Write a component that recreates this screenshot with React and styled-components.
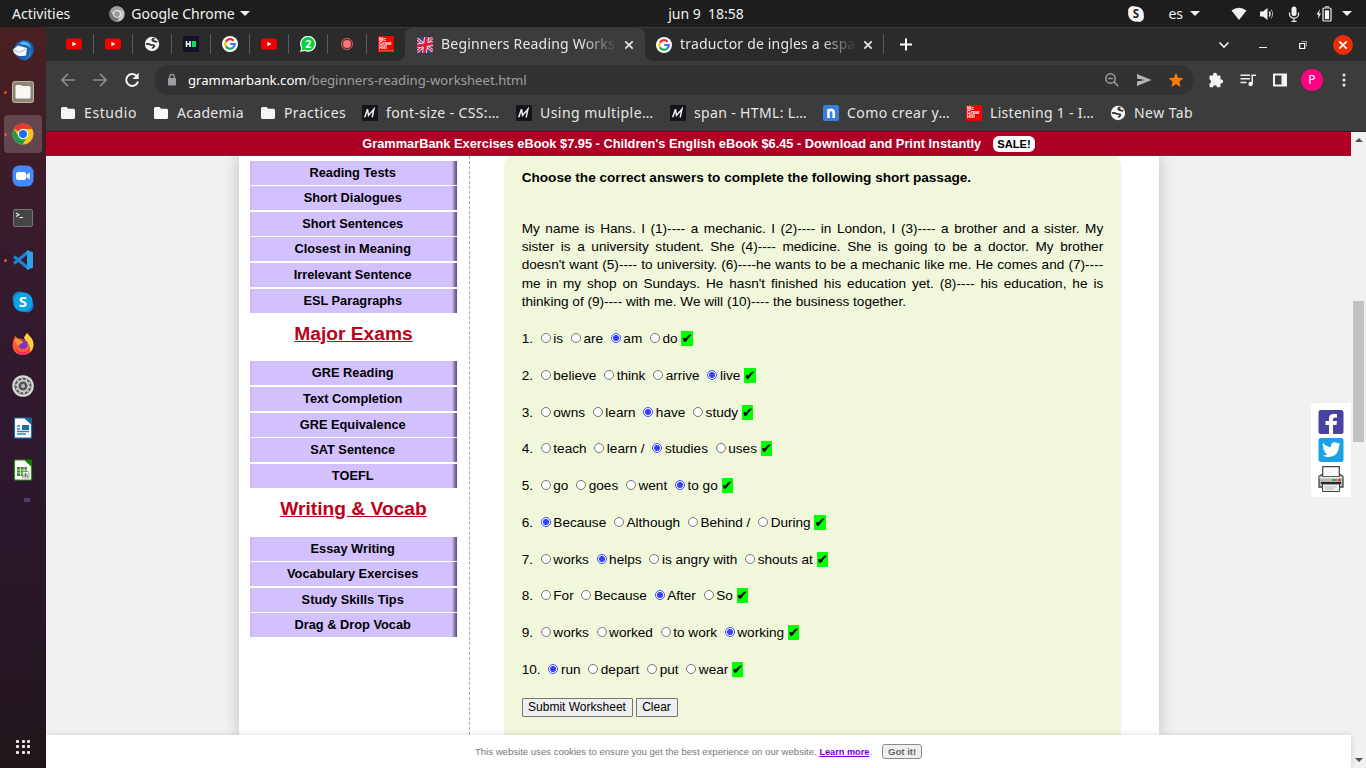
import React from "react";
import styled, { createGlobalStyle, css } from "styled-components";

const UI = `"Noto Sans", "Open Sans", sans-serif`;
const ARIAL = `"Liberation Sans", "DejaVu Sans", sans-serif`;

const GlobalStyle = createGlobalStyle`
  * { box-sizing: border-box; }
  body { margin: 0; overflow: hidden; background: #f1f1f1; }
  svg { display: block; flex: none; }
`;

/* ---------- desktop shell ---------- */
const Desktop = styled.div`
  width: 1366px;
  height: 768px;
  display: flex;
  flex-direction: column;
  overflow: hidden;
  font-family: ${UI};
`;
const TopBar = styled.header`
  height: 27px;
  flex: none;
  display: grid;
  grid-template-columns: 1fr auto 1fr;
  align-items: center;
  background: #1d1d1d;
  color: #f2f2f2;
  font-size: 14px;
  line-height: 27px;
  padding: 0 14px 0 12px;
`;
const Clock = styled.time`
  margin-left: 48px;
  white-space: pre;
  margin-top: -1px;
`;
const TopGroup = styled.div`
  display: flex;
  align-items: center;
  justify-content: ${(p) => (p.$end ? "flex-end" : "flex-start")};
`;
const Label = styled.span`
  white-space: pre;
  letter-spacing: ${(p) => p.$track || 0}px;
  margin-left: ${(p) => p.$ml || 0}px;
`;
const Gap = styled.span`
  flex: none;
  width: ${(p) => p.$w}px;
`;
const Caret = styled.i`
  border: 5px solid transparent;
  border-top-color: #f2f2f2;
  border-bottom: 0;
`;
const Workspace = styled.div`
  flex: 1;
  display: flex;
  min-height: 0;
`;

/* ---------- dock ---------- */
const Dock = styled.nav`
  width: 46px;
  flex: none;
  display: flex;
  flex-direction: column;
  padding: 2px 4px 10px;
  background: linear-gradient(#4a2022 0, #3d1c28 18%, #331a2e 38%, #2d182d 60%, #271726 82%, #20161a 100%);
`;
const DockSlot = styled.div`
  position: relative;
  height: 42px;
  flex: none;
  display: flex;
  align-items: center;
  justify-content: center;
  ${(p) =>
    p.$active &&
    css`
      &::before {
        content: "";
        position: absolute;
        inset: 2px 0;
        border-radius: 4px;
        background: rgba(255, 255, 255, 0.19);
      }
    `}
  ${(p) =>
    p.$running &&
    css`
      &::after {
        content: "";
        position: absolute;
        left: 0;
        top: 20px;
        width: 3px;
        height: 3px;
        border-radius: 50%;
        background: #e95420;
      }
    `}
  svg { position: relative; }
`;
const DockStub = styled.div`
  width: 6px;
  height: 4px;
  margin: 7px 0 0 20px;
  background: #47406a;
`;
const AppsGrid = styled.div`
  margin: auto auto 4px;
  display: grid;
  grid-template-columns: repeat(3, 3px);
  grid-auto-rows: 3px;
  gap: 2.6px;
  i { background: #eee; border-radius: 1px; }
`;

/* ---------- browser chrome ---------- */
const Browser = styled.main`
  flex: 1;
  min-width: 0;
  display: flex;
  flex-direction: column;
  background: #3c3c3c;
`;
const TabStrip = styled.div`
  height: 34px;
  flex: none;
  display: flex;
  background: #2b2b2b;
  border-top: 1px solid #3b3b3b;
  padding-left: 9px;
`;
const PinnedTab = styled.div`
  width: 39px;
  flex: none;
  display: flex;
  align-items: center;
  justify-content: center;
  border-right: 1px solid ${(p) => (p.$last ? "transparent" : "#5d5d5d")};
  height: 20px;
  margin: 6px 0;
`;
const Tab = styled.div`
  position: relative;
  width: ${(p) => p.$w}px;
  flex: none;
  display: flex;
  align-items: center;
  padding-left: ${(p) => (p.$active ? 12 : 11)}px;
  color: #e6e6e6;
  font-size: 14px;
  margin-left: ${(p) => (p.$active ? -1 : 0)}px;
  ${(p) =>
    p.$active &&
    css`
      background: #3c3c3c;
      border-radius: 8px 8px 0 0;
      &::before, &::after {
        content: "";
        position: absolute;
        bottom: 0;
        width: 8px;
        height: 8px;
      }
      &::before { right: 100%; background: radial-gradient(circle at 0 0, transparent 7.5px, #3c3c3c 8px); }
      &::after { left: 100%; background: radial-gradient(circle at 100% 0, transparent 7.5px, #3c3c3c 8px); }
    `}
`;
const TabTitle = styled.span`
  width: 175px;
  margin-left: 8px;
  margin-right: 8px;
  white-space: nowrap;
  letter-spacing: ${(p) => p.$track}px;
  line-height: 22px;
  margin-top: -1px;
  mask-image: linear-gradient(to right, #000 80%, transparent 101%);
`;
const TabDivider = styled.i`
  width: 1px;
  height: 20px;
  margin: 6px 14px 0 0;
  background: #5d5d5d;
`;
const WindowControls = styled.div`
  margin-left: auto;
  display: flex;
  align-items: center;
  padding-right: 13px;
`;
const CloseWindow = styled.div`
  width: 20px;
  height: 20px;
  border-radius: 50%;
  background: #e92f06;
  display: grid;
  place-items: center;
  margin-left: 26px;
`;
const Toolbar = styled.div`
  height: 38px;
  flex: none;
  display: flex;
  align-items: center;
  padding: 0 15px 0 14px;
`;
const Omnibox = styled.div`
  flex: 1;
  height: 30px;
  margin: 0 14px;
  border-radius: 15px;
  background: #323232;
  display: flex;
  align-items: center;
  padding: 0 10px 0 11px;
  font-size: 13.15px;
  color: #9e9e9e;
  b { font-weight: 400; color: #fff; }
`;
const OmniActions = styled.div`
  margin-left: auto;
  display: flex;
  align-items: center;
  gap: 16px;
`;
const Avatar = styled.div`
  flex: none;
  width: 22px;
  height: 22px;
  border-radius: 50%;
  background: #ff0083;
  color: #fff;
  font-size: 12px;
  line-height: 22px;
  text-align: center;
  margin: 0 14px 0 13px;
`;
const Bookmarks = styled.div`
  height: 33px;
  flex: none;
  display: flex;
  align-items: center;
  padding: 0 0 5px 14px;
  border-bottom: 1px solid #262626;
  color: #e6e6e6;
  font-size: 14px;
`;
const Bookmark = styled.div`
  display: flex;
  align-items: center;
  width: ${(p) => p.$w}px;
  flex: none;
`;

/* ---------- web page ---------- */
const Viewport = styled.div`
  flex: 1;
  min-height: 0;
  display: flex;
`;
const Page = styled.div`
  position: relative;
  width: 1305px;
  display: flex;
  flex-direction: column;
  background: #f1f1f1;
  font-family: ${ARIAL};
  color: #000;
`;
const Promo = styled.div`
  position: relative;
  z-index: 1;
  height: 24px;
  flex: none;
  display: flex;
  align-items: center;
  justify-content: center;
  background: #ad0024;
  color: #fff;
  font-weight: 700;
  font-size: 12.8px;
  padding-bottom: 1px;
`;
const Sale = styled.span`
  height: 16px;
  margin-left: 12px;
  padding: 0 4px;
  border-radius: 6px;
  background: #fff;
  color: #000;
  font-size: 11.2px;
  line-height: 16px;
`;
const Scroll = styled.div`
  flex: 1;
  min-height: 0;
  overflow: hidden;
  display: flex;
  justify-content: center;
`;
const Sheet = styled.div`
  width: 920px;
  display: flex;
  background: #fff;
  box-shadow: 0 0 15px rgba(0, 0, 0, 0.22);
`;
const Sidebar = styled.aside`
  width: 231px;
  flex: none;
  padding: 4.6px 12px 0 11px;
  border-right: 1px dashed #aaa;
`;
const NavItem = styled.div`
  height: 24px;
  margin-bottom: 1.6px;
  background: linear-gradient(to right, #c6b6f0, #d3c0ff 3px, #d3c0ff calc(100% - 5px), #9489b4 calc(100% - 3px), #584f70);
  font-weight: 700;
  font-size: 12.8px;
  line-height: 24px;
  text-align: center;
  padding-right: 0.6px;
`;
const NavHeading = styled.h3`
  margin: 0 0 0 1px;
  height: 47.2px;
  padding-top: 9px;
  font-size: 19.2px;
  line-height: 22px;
  text-align: center;
  text-decoration: underline;
  color: #bf0019;
`;
const Worksheet = styled.section`
  width: 617px;
  height: 640px;
  margin: -2px 0 0 34px;
  padding: 14.5px 17.3px 0 18.2px;
  border-radius: 12px 12px 0 0;
  background: #f1f7da;
  font-size: 13.6px;
  line-height: 18.36px;
`;
const Title = styled.p`
  margin: 0 0 32.9px;
  font-weight: 700;
`;
const Passage = styled.p`
  margin: 0 0 18.65px;
  text-align: justify;
`;
const Question = styled.div`
  height: 36.75px;
  white-space: pre;
`;
const Radio = styled.input`
  appearance: none;
  width: 10px;
  height: 10px;
  margin: 0 2.5px 0 4px;
  border: 1px solid #767676;
  border-radius: 50%;
  background: #fff;
  vertical-align: 0;
  &:checked {
    border-color: #3a4dff;
    background: radial-gradient(circle, #3b40ff 2.7px, #fff 3.4px);
  }
`;
const Tick = styled.span`
  background: #0f0;
`;
const Buttons = styled.div`
  display: flex;
  gap: 3px;
  margin: 0.2px 0 0 -0.2px;
`;
const Button = styled.button`
  width: ${(p) => p.$w}px;
  height: 19px;
  padding: 0 0 1px;
  border: 1px solid #767676;
  border-radius: 1px;
  background: #efefef;
  color: #000;
  font: 12px/16px ${ARIAL};
`;
const CookieBar = styled.div`
  position: relative;
  z-index: 1;
  height: 33px;
  flex: none;
  display: flex;
  align-items: center;
  justify-content: center;
  background: #fff;
  box-shadow: 0 0 6px rgba(0, 0, 0, 0.15);
  color: #777;
  font-size: 9.58px;
  a { color: #6a00e8; font-weight: 700; font-size: 9.2px; text-decoration: underline; }
`;
const GotIt = styled.button`
  width: 40px;
  height: 15px;
  margin-left: 10px;
  padding: 0;
  border: 1px solid #8a8a8a;
  border-radius: 3px;
  background: #efefef;
  color: #666;
  font: 700 9.6px/13px ${ARIAL};
`;
const Share = styled.div`
  position: absolute;
  z-index: 2;
  right: 0;
  top: 271px;
  width: 40px;
  height: 94px;
  padding: 7px 7px 0;
  border-radius: 4px 0 0 4px;
  background: #fff;
  display: flex;
  flex-direction: column;
  gap: 4px;
`;
const ScrollBar = styled.div`
  width: 15px;
  display: flex;
  flex-direction: column;
  align-items: center;
  background: #f1f1f1;
`;
const Thumb = styled.div`
  width: 11px;
  height: 141px;
  margin-top: 159px;
  background: #c1c1c1;
`;
const Arrow = styled.i`
  border: 4px solid transparent;
  ${(p) =>
    p.$up
      ? css`border-bottom-color: #505050; border-top: 0; margin-top: 6px;`
      : css`border-top-color: #505050; border-bottom: 0; margin: auto 0 6px;`}
`;

/* ---------- icons ---------- */
const Svg = ({ s = 16, w, h, vb = "0 0 16 16", children, ...rest }) => (
  <svg width={w || s} height={h || s} viewBox={vb} {...rest}>{children}</svg>
);
const YouTube = () => (
  <Svg><rect y="2.500" width="16" height="11" rx="2.600" fill="#f50000" /><path d="M6.400 5.700v4.600L10.400 8z" fill="#fff" /></Svg>
);
const Globe = () => (
  <Svg>
    <circle cx="8" cy="8" r="7.200" fill="#f4f4f4" />
    <path d="M10.600 2.400C8 2.600 7.600 3.800 9 4.800c1.300.9 3 .2 4.200 1.400M1.800 8.200c2-.6 3.400-.4 4.400.4 1.400 1.100 4-.4 4.200 1.200.1 1.400-1.600 1.200-2 2.800" fill="none" stroke="#2b2b2b" strokeWidth="1.700" />
  </Svg>
);
const HD = () => (
  <Svg><rect width="16" height="16" fill="#101424" /><path d="M3.500 5v6M7 5v6M3.500 8H7" stroke="#fff" strokeWidth="1.500" /><path d="M8.800 5h4.200v6H8.800z" fill="#0be060" /></Svg>
);
const Google = () => (
  <Svg>
    <circle cx="8" cy="8" r="8" fill="#fff" />
    <g fill="none" strokeWidth="2.200">
      <path d="M11.600 4.700A4.800 4.800 0 0 0 3.900 5.600" stroke="#ea2a2a" />
      <path d="M3.900 5.600a4.800 4.800 0 0 0 0 4.800" stroke="#fbbc05" />
      <path d="M3.900 10.400a4.800 4.800 0 0 0 7.200 1.200" stroke="#19b34a" />
      <path d="M11.100 11.600A4.800 4.800 0 0 0 12.800 8H8.200" stroke="#4270ff" />
    </g>
  </Svg>
);
const WhatsApp = () => (
  <Svg>
    <path d="M0 16l1.200-4A8 8 0 1 1 4.500 15z" fill="#fff" />
    <path d="M1.600 14.500l.9-3A6.700 6.700 0 1 1 5 13.700z" fill="#00d23e" />
    <text x="8.200" y="12" fontSize="10.500" fontWeight="700" textAnchor="middle" fill="#fff" fontFamily="Noto Sans">2</text>
  </Svg>
);
const Record = () => (
  <Svg><circle cx="8" cy="8" r="5.500" fill="none" stroke="#e86262" strokeWidth="1" /><circle cx="8" cy="8" r="4" fill="#ff7373" /></Svg>
);
const McGraw = ({ foot }) => (
  <Svg>
    <rect width="16" height="16" fill="#f40000" />
    <g fill="#fff" fontFamily="Liberation Sans" fontWeight="700" fontSize="5">
      <text x="1" y="4.800">Mc</text><text x="1" y="9">Graw</text><text x="1" y="13.200">Hill</text>
    </g>
    {foot && <path d="M1 14.800h14" stroke="#ffb0b0" strokeWidth=".8" strokeDasharray="1.500 .6" />}
  </Svg>
);
const UKFlag = () => (
  <Svg>
    <rect width="16" height="16" fill="#35458c" />
    <path d="M0 2l16 12M16 0L0 15" stroke="#f2e6ee" strokeWidth="3" />
    <path d="M0 2l16 12M16 0L0 15" stroke="#d81c3c" strokeWidth="1.300" />
    <path d="M9.500 0L7.500 16M0 9l16-2.500" stroke="#f2e6ee" strokeWidth="4.800" />
    <path d="M9.500 0L7.500 16M0 9l16-2.500" stroke="#d81c3c" strokeWidth="3" />
  </Svg>
);
const Mdn = () => (
  <Svg><rect width="16" height="16" fill="#15141a" /><path d="M2.700 12.300L5.500 4.200L6.500 10.400L11.900 4.200L10.200 12.300" fill="none" stroke="#eee" strokeWidth="1.500" /></Svg>
);
const NIcon = () => (
  <Svg><rect width="16" height="16" rx="1.500" fill="#3b7ddb" /><path d="M5.500 13V4M10.700 13V7.200C10.700 4.400 7.500 4.400 5.500 6" fill="none" stroke="#fff" strokeWidth="2.600" /></Svg>
);
const Folder = () => (
  <Svg><path d="M1 3.500Q1 2 2.500 2h4l1.700 1.800h5.300Q15 3.800 15 5.300v7.200Q15 14 13.500 14h-11Q1 14 1 12.500z" fill="#f8f8f8" /></Svg>
);
const Cross = ({ c = "#e6e6e6", s = 10 }) => (
  <Svg s={s} vb="0 0 10 10"><path d="M1.300 1.300l7.400 7.400M8.700 1.300L1.300 8.700" stroke={c} strokeWidth="1.700" /></Svg>
);
const ChromeLogo = ({ s, gray }) => {
  const [r, y, g, b] = gray ? ["#a0a0a0", "#c4c4c4", "#777", "#999"] : ["#e33b2e", "#fcc31e", "#28994a", "#1a73e8"];
  return (
    <Svg s={s} vb="0 0 24 24">
      <circle cx="12" cy="12" r="11.500" fill={y} />
      <path d="M12 12L2 6.300A11.500 11.500 0 0 1 22 6.500H12z" fill={r} />
      <path d="M2 6.300A11.500 11.500 0 0 0 11.500 23.500L16.700 14.700 12 12 7.200 14.700z" fill={g} />
      <circle cx="12" cy="12" r="5.600" fill="#fff" /><circle cx="12" cy="12" r="4.400" fill={b} />
    </Svg>
  );
};

const Thunderbird = () => (
  <Svg s={22} vb="0 0 22 22">
    <path d="M3 7C7-1 20-1 21.600 9c1 7-4 12-9.600 12.500C5 20 1 14 3 7z" fill="#1c5fb0" />
    <path d="M7 4c6-4 12 0 12 6-2-4-6-4-8-4z" fill="#4fb4f4" />
    <path d="M.8 10.500L6 6.500l9 2.500-1 7.500Q6 18.500 2 14z" fill="#f4f7fb" /><path d="M1.500 10.500l6 3 7-4" fill="none" stroke="#9db4cf" />
    <path d="M11 21q8-3 7-12 3 9-7 12z" fill="#3d8fe2" />
  </Svg>
);
const Files = () => (
  <Svg s={22} vb="0 0 22 22"><rect x=".5" y=".5" width="21" height="21" rx="2" fill="#8d8675" stroke="#bcb5a4" /><path d="M3.500 5.500q0-1.500 1.500-1.500h4l1.500 1H17q1.500 0 1.500 1.500V16q0 1.500-1.500 1.500H5q-1.500 0-1.500-1.500z" fill="#faf8f5" /></Svg>
);
const Zoom = () => (
  <Svg s={22} vb="0 0 22 22"><rect x=".5" y=".5" width="21" height="21" rx="6.500" fill="#4489fb" /><rect x="4" y="7" width="10" height="8" rx="2" fill="#fff" /><path d="M14.500 10l3.200-2.500v7L14.500 12z" fill="#fff" /></Svg>
);
const Terminal = () => (
  <Svg s={22} vb="0 0 22 22"><rect x="1.500" y="2.500" width="19" height="17" rx="1.500" fill="#454545" stroke="#777" /><path d="M4 6l3 1.700L4 9.400M7.500 10.500H11" fill="none" stroke="#eee" strokeWidth="1.100" /></Svg>
);
const VSCode = () => (
  <Svg s={22} vb="0 0 22 22"><path d="M16 3L2 14.500M2 7.500L16 19" stroke="#1d87cf" strokeWidth="3" /><path d="M15 1l6 2.500v15L15 21z" fill="#2ba3ec" /></Svg>
);
const Skype = () => (
  <Svg s={22} vb="0 0 22 22"><circle cx="7" cy="7" r="6.500" fill="#1679c2" /><circle cx="15" cy="15" r="6.500" fill="#1679c2" /><circle cx="11" cy="11" r="9.800" fill="#0aa5e6" /><text x="11" y="16.200" textAnchor="middle" fontFamily="Noto Sans" fontWeight="700" fontSize="15" fill="#fff">S</text></Svg>
);
const Firefox = () => (
  <Svg s={22} vb="0 0 22 22">
    <path d="M1.500 7L3 3l3 2.500h2L13 7l-1-3 3-4 5 6c4 8-1 16-9 16C3 22-1.500 15 1.500 7z" fill="#ff5a36" />
    <path d="M15 0l5 6c2.500 5 1.500 10-1.500 13 0-7-3-10-6.500-14z" fill="#ffd33c" />
    <path d="M3 14q2 5 8 5.500 5-.5 7-5.500 0 6-7 8-7-1-8-8z" fill="#f9285e" />
    <circle cx="11" cy="11.500" r="4.600" fill="#7a35c8" />
    <path d="M3 6q4-1 5 2 4 0 3 2-3 0-3.500 2.500Q3 12 3 6z" fill="#ff9a28" />
  </Svg>
);
const Settings = () => (
  <Svg s={22} vb="0 0 22 22"><circle cx="11" cy="11" r="10.800" fill="#d9d8d4" /><circle cx="11" cy="11" r="8.600" fill="#555" /><circle cx="11" cy="11" r="5.400" fill="none" stroke="#ccc" strokeWidth="1.800" /><circle cx="11" cy="11" r="7" fill="none" stroke="#ccc" strokeWidth="1.700" strokeDasharray="2.200 2.198" /><circle cx="11" cy="11" r="2" fill="#bbb" /></Svg>
);
const Writer = () => (
  <Svg s={22} vb="0 0 22 22"><path d="M2.500 2Q2.500 1 3.500 1H13l6.500 6v13q0 1-1 1h-15q-1 0-1-1z" fill="#fff" stroke="#1c6fa5" strokeWidth="1.200" /><path d="M12 .5h7q1 0 1 1V8z" fill="#16689c" /><path d="M5 9h3M5 12h3M5 14.500h12M5 17h9" stroke="#2d84ba" strokeWidth="1.300" /><rect x="10" y="8" width="7" height="5" fill="#1c6fa5" /></Svg>
);
const Calc = () => (
  <Svg s={22} vb="0 0 22 22"><path d="M2.500 2Q2.500 1 3.500 1H13l6.500 6v13q0 1-1 1h-15q-1 0-1-1z" fill="#fff" stroke="#2c9112" strokeWidth="1.200" /><path d="M12 .5h7q1 0 1 1V8z" fill="#187c0b" /><path d="M5 8h10v9H5z" fill="#38891f" /><path d="M5 11h10M5 14h10M8.500 8v9M12 8v9" stroke="#fff" strokeWidth=".7" /><path d="M10.500 12.500H17V19h-6.500z" fill="#eee" stroke="#777" strokeWidth=".6" /><path d="M12 18v-3" stroke="#d83" /><path d="M13.700 18v-4" stroke="#248" /><path d="M15.400 18v-2.500" stroke="#4a3" /></Svg>
);

const stroke = { fill: "none", stroke: "#eee" };
const SkypeTray = () => (
  <Svg><path d="M5 0A4.800 4.800 0 0 0 .3 6.200 8 8 0 0 0 9.600 15.600 4.800 4.800 0 0 0 15.700 9.600 8 8 0 0 0 6.800.5 4.800 4.800 0 0 0 5 0z" fill="#f4f4f4" /><text x="8" y="12.200" textAnchor="middle" fontFamily="Noto Sans" fontWeight="700" fontSize="11.500" fill="#1d1d1d">S</text></Svg>
);
const Wifi = () => <Svg><path d="M.5 4.500Q8 -1 15.500 4.500L8 14z" fill="#f2f2f2" /></Svg>;
const Volume = () => (
  <Svg><path d="M1 5.500h3L8.500 2v12L4 10.500H1z" fill="#f2f2f2" /><path d="M10.200 5.500q1.800 2.500 0 5" {...stroke} strokeWidth="1.300" /><path d="M12 3.500q3.300 4.500 0 9" {...stroke} stroke="#aaa" strokeWidth="1" /></Svg>
);
const Mic = () => (
  <Svg><rect x="5.500" y=".5" width="5" height="9.500" rx="2.500" fill="#f2f2f2" /><path d="M3.500 6.500v1.700a4.500 4 0 0 0 9 0V6.500M8 12.300V15M5.500 15.300h5" {...stroke} strokeWidth="1.200" /></Svg>
);
const Battery = () => (
  <Svg><path d="M4 3L.5 8.500h2L2 13l3-5.500H3z" fill="#f2f2f2" /><rect x="7" y="2" width="8" height="13" rx="1" {...stroke} strokeWidth="1.200" /><path d="M9 .8h4" stroke="#f2f2f2" /><path d="M8.900 4.300h4.200v8.900H8.900z" fill="#f2f2f2" /></Svg>
);
const ArrowIcon = ({ flip }) => (
  <Svg>
    <path d={flip ? "M1 8h13M8 1.800L14.200 8 8 14.200" : "M15 8H2M8 1.800L1.800 8 8 14.200"} fill="none" stroke="#8b8b8b" strokeWidth="1.700" />
  </Svg>
);
const Reload = () => (
  <Svg><path d="M13 4.300A6 6 0 1 0 14 9.500" fill="none" stroke="#f4f4f4" strokeWidth="2" /><path d="M14.700.8v6.200H8.500z" fill="#f4f4f4" /></Svg>
);
const Lock = () => (
  <Svg s={14} vb="0 0 14 14"><rect x="3" y="5" width="8" height="7.500" rx="1" fill="#9aa0a6" /><path d="M4.800 5V3.500a2.200 2.200 0 0 1 4.400 0V5" fill="none" stroke="#9aa0a6" strokeWidth="1.300" /></Svg>
);
const ZoomOut = () => (
  <Svg><circle cx="6.500" cy="6.500" r="4.700" fill="none" stroke="#a0a0a0" strokeWidth="1.500" /><path d="M4.200 6.500h4.600M10 10l4.300 4.300" stroke="#a0a0a0" strokeWidth="1.500" /></Svg>
);
const Send = () => <Svg><path d="M1 2l14.500 6L1 14V9.400L9 8 1 6.600z" fill="#b4b4b4" /></Svg>;
const Star = () => <Svg><path d="M8 .8l2.100 5 5.300.4-4.100 3.500 1.300 5.200L8 12.100l-4.600 2.800 1.300-5.200L.6 6.200l5.300-.4z" fill="#ff7a0c" /></Svg>;
const Puzzle = () => (
  <Svg><path d="M1.500 4.500q0-1 1-1H5.200a2 2 0 1 1 3.600 0h2.700q1 0 1 1v3a2 2 0 1 1 0 3.800v2.900q0 1-1 1H9a2 2 0 0 0-4 0H2.500q-1 0-1-1V11.400a2 2 0 0 0 0-3.900z" fill="#f4f4f4" /></Svg>
);
const Playlist = () => (
  <Svg><path d="M.5 3.200h9.500M.5 6.800h9.500M.5 10.400h6M12.200 12V3.200H16" fill="none" stroke="#eee" strokeWidth="1.500" /><circle cx="10.600" cy="12" r="2.200" fill="#eee" /></Svg>
);
const SidePanel = () => <Svg><path d="M1 1.500h14v13H1z" fill="#f4f4f4" /><path d="M3 3.500h6.500v9H3z" fill="#3c3c3c" /></Svg>;
const More = () => <Svg s={14} vb="0 0 14 14" fill="#eee"><circle cx="7" cy="2" r="1.500" /><circle cx="7" cy="7" r="1.500" /><circle cx="7" cy="12" r="1.500" /></Svg>;

const Facebook = () => (
  <Svg w={26} h={24} vb="0 0 26 24"><rect x=".5" width="25" height="24" rx="2.500" fill="#4842a0" /><path d="M11 24v-9H7.500v-4H11V8.500Q11 4 15.500 4H19v3.600h-2.200q-1.800 0-1.800 1.800V11h4l-.6 4H15v9z" fill="#fff" /></Svg>
);
const Twitter = () => (
  <Svg w={26} h={24} vb="0 0 26 24"><rect x=".5" width="25" height="24" rx="2.500" fill="#1ba1e2" /><path d="M5 5q3.500 4 8 4.200C12.500 6 14.500 4 17 4.200q1.500.1 2.600 1.200L22 4.500l-1.400 2.200 2-.4L20.800 8.200C21 15 16 19 10.500 19 8 19 6 18.400 4.500 17.500q3 .2 5-1.500Q7 15.700 6 13.300h1.600Q5 12.500 4.800 9.500l1.600.4Q3.800 8 5 5z" fill="#fff" /></Svg>
);
const Printer = () => (
  <Svg w={26} h={28} vb="0 1 26 28">
    <path d="M1 11.500L4 9.500h18l3 2V22H1z" fill="#b8b8b8" stroke="#444" strokeWidth="1.300" />
    <path d="M4.700 1.600h16.600v10H4.700z" fill="#fafafa" stroke="#444" strokeWidth="1.200" /><path d="M1.500 12.600h23" stroke="#eee" strokeWidth="1.500" />
    <path d="M14 14h5v2h-5z" fill="#4c9e66" /><circle cx="21.500" cy="15" r="1.500" fill="#e33" />
    <path d="M3 18h20" stroke="#222" strokeWidth="2" /><path d="M4.500 19h17v7.500h-17z" fill="#eee" stroke="#444" /><path d="M6.500 22h12M6.500 24h9" stroke="#bbb" />
  </Svg>
);

/* ---------- data ---------- */
const pinned = [YouTube, YouTube, Globe, HD, Google, YouTube, WhatsApp, Record, () => <McGraw foot />];
const dock = [
  { Icon: Thunderbird },
  { Icon: Files, running: true },
  { Icon: () => <ChromeLogo s={22} />, running: true, active: true },
  { Icon: Zoom },
  { Icon: Terminal },
  { Icon: VSCode, running: true },
  { Icon: Skype },
  { Icon: Firefox },
  { Icon: Settings },
  { Icon: Writer },
  { Icon: Calc },
];
const bookmarks = [
  [Folder, "Estudio", 93, 0.6],
  [Folder, "Academia", 107, 0.3],
  [Folder, "Practices", 102, 0.4],
  [Mdn, "font-size - CSS:…", 154, 0.37],
  [Mdn, "Using multiple…", 154, 0.46],
  [Mdn, "span - HTML: L…", 153, 0.35],
  [NIcon, "Como crear y…", 143, 0.42],
  [McGraw, "Listening 1 - I…", 144, 0.3],
  [Globe, "New Tab", 100, 0.45],
];
const menu = [
  { items: ["Reading Tests", "Short Dialogues", "Short Sentences", "Closest in Meaning", "Irrelevant Sentence", "ESL Paragraphs"] },
  { title: "Major Exams", items: ["GRE Reading", "Text Completion", "GRE Equivalence", "SAT Sentence", "TOEFL"] },
  { title: "Writing & Vocab", items: ["Essay Writing", "Vocabulary Exercises", "Study Skills Tips", "Drag & Drop Vocab"] },
];
const questions = [
  [["is", "are", "am", "do"], 2],
  [["believe", "think", "arrive", "live"], 3],
  [["owns", "learn", "have", "study"], 2],
  [["teach", "learn /", "studies", "uses"], 2],
  [["go", "goes", "went", "to go"], 3],
  [["Because", "Although", "Behind /", "During"], 0],
  [["works", "helps", "is angry with", "shouts at"], 1],
  [["For", "Because", "After", "So"], 2],
  [["works", "worked", "to work", "working"], 3],
  [["run", "depart", "put", "wear"], 0],
];

export default function App() {
  return (
    <Desktop>
      <GlobalStyle />
      <TopBar>
        <TopGroup>
          <Label>Activities</Label>
          <Gap $w={39} />
          <ChromeLogo s={16} gray />
          <Label $ml={6}>Google Chrome</Label>
          <Gap $w={5} />
          <Caret />
        </TopGroup>
        <Clock>jun 9  18:58</Clock>
        <TopGroup $end>
          <SkypeTray /><Gap $w={24} />
          <Label>es</Label><Gap $w={7} /><Caret /><Gap $w={31} />
          <Wifi /><Gap $w={12} /><Volume /><Gap $w={11} /><Mic /><Gap $w={14} /><Battery /><Gap $w={10} /><Caret />
        </TopGroup>
      </TopBar>

      <Workspace>
        <Dock>
          {dock.map(({ Icon, running, active }, i) => (
            <DockSlot key={i} $running={running} $active={active}><Icon /></DockSlot>
          ))}
          <DockStub />
          <AppsGrid>{Array.from({ length: 9 }, (_, i) => <i key={i} />)}</AppsGrid>
        </Dock>

        <Browser>
          <TabStrip>
            {pinned.map((Icon, i) => (
              <PinnedTab key={i} $last={i === pinned.length - 1}><Icon /></PinnedTab>
            ))}
            <Tab $active $w={240}>
              <UKFlag /><TabTitle $track={0.2}>Beginners Reading Works</TabTitle><Cross />
            </Tab>
            <Tab $w={238}>
              <Google /><TabTitle $track={0.18}>traductor de ingles a espa</TabTitle><Cross />
            </Tab>
            <TabDivider />
            <Svg w={16} h={33} vb="0 0 16 33"><path d="M8 10.500v12M2 16.500h12" stroke="#fff" strokeWidth="2" /></Svg>
            <WindowControls>
              <Svg s={12} vb="0 0 12 12"><path d="M1.500 3.500L6 8l4.500-4.500" fill="none" stroke="#eee" strokeWidth="1.700" /></Svg>
              <Gap $w={29} />
              <Svg w={8} h={12} vb="0 0 8 12"><path d="M0 8.500h8" stroke="#eee" /></Svg>
              <Gap $w={32} />
              <Svg s={8} vb="0 0 8 8"><path d="M.7 2.500h5v5h-5z" fill="none" stroke="#fff" strokeWidth="1.200" /><path d="M2.500.5h5v5" fill="none" stroke="#999" /></Svg>
              <CloseWindow><Cross c="#fff" s={10} /></CloseWindow>
            </WindowControls>
          </TabStrip>

          <Toolbar>
            <ArrowIcon /><Gap $w={16} /><ArrowIcon flip /><Gap $w={16} /><Reload />
            <Omnibox>
              <Lock />
              <Label $ml={9}><b>grammarbank.com</b>/beginners-reading-worksheet.html</Label>
              <OmniActions><ZoomOut /><Send /><Star /></OmniActions>
            </Omnibox>
            <Puzzle /><Gap $w={16} /><Playlist /><Gap $w={16} /><SidePanel />
            <Avatar>P</Avatar>
            <More />
          </Toolbar>

          <Bookmarks>
            {bookmarks.map(([Icon, text, w, track]) => (
              <Bookmark key={text} $w={w}><Icon /><Label $ml={8} $track={track}>{text}</Label></Bookmark>
            ))}
          </Bookmarks>

          <Viewport>
            <Page>
              <Promo>
                GrammarBank Exercises eBook $7.95 - Children's English eBook $6.45 - Download and Print Instantly
                <Sale>SALE!</Sale>
              </Promo>
              <Scroll>
                <Sheet>
                  <Sidebar>
                    {menu.map(({ title, items }, i) => (
                      <React.Fragment key={i}>
                        {title && <NavHeading>{title}</NavHeading>}
                        {items.map((t) => <NavItem key={t}>{t}</NavItem>)}
                      </React.Fragment>
                    ))}
                  </Sidebar>
                  <Worksheet>
                    <Title>Choose the correct answers to complete the following short passage.</Title>
                    <Passage>
                      My name is Hans. I (1)---- a mechanic. I (2)---- in London, I (3)---- a brother and a sister. My
                      sister is a university student. She (4)---- medicine. She is going to be a doctor. My brother
                      doesn't want (5)---- to university. (6)----he wants to be a mechanic like me. He comes and (7)----
                      me in my shop on Sundays. He hasn't finished his education yet. (8)---- his education, he is
                      thinking of (9)---- with me. We will (10)---- the business together.
                    </Passage>
                    {questions.map(([options, picked], q) => (
                      <Question key={q}>
                        {`${q + 1}. `}
                        {options.map((o, i) => (
                          <React.Fragment key={o}>
                            <Radio type="radio" name={`q${q}`} defaultChecked={i === picked} />
                            {`${o} `}
                          </React.Fragment>
                        ))}
                        <Tick>✔</Tick>
                      </Question>
                    ))}
                    <Buttons>
                      <Button $w={111}>Submit Worksheet</Button>
                      <Button $w={42}>Clear</Button>
                    </Buttons>
                  </Worksheet>
                </Sheet>
              </Scroll>
              <CookieBar>
                <span>This website uses cookies to ensure you get the best experience on our website. <a>Learn more</a>.</span>
                <GotIt>Got it!</GotIt>
              </CookieBar>
              <Share><Facebook /><Twitter /><Printer /></Share>
            </Page>
            <ScrollBar><Arrow $up /><Thumb /><Arrow /></ScrollBar>
          </Viewport>
        </Browser>
      </Workspace>
    </Desktop>
  );
}
